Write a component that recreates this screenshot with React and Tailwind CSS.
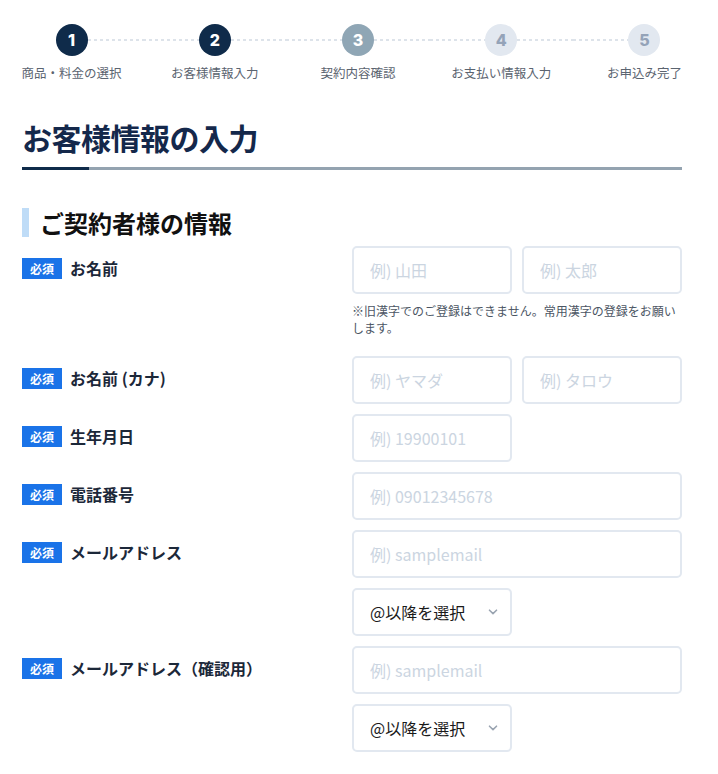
import React from 'react';

const steps = [
  { n: 1, label: '商品・料金の選択', state: 'done' },
  { n: 2, label: 'お客様情報入力', state: 'done' },
  { n: 3, label: '契約内容確認', state: 'current' },
  { n: 4, label: 'お支払い情報入力', state: 'todo' },
  { n: 5, label: 'お申込み完了', state: 'todo' },
];

const circleClass = {
  done: 'bg-[#0f2b4a] text-white',
  current: 'bg-[#8fa6b5] text-white',
  todo: 'bg-[#e2e8f0] text-[#94a3b8]',
};

const dots = 'h-[2px] flex-1 bg-[linear-gradient(to_right,#dde3ea_50%,transparent_0)] bg-[length:6px_2px] bg-repeat-x';

function Stepper() {
  return (
    <div className="grid grid-cols-5 pt-[24px] w-[716px]">
      {steps.map((s, i) => (
        <div key={s.n} className="flex flex-col items-center">
          <div className="flex items-center w-full">
            <div className={i === 0 ? 'flex-1' : dots} />
            <div
              className={`w-[32px] h-[32px] rounded-full flex items-center justify-center text-[16px] font-extrabold font-['Inter',sans-serif] ${circleClass[s.state]}`}
            >
              {s.n}
            </div>
            <div className={i === steps.length - 1 ? 'flex-1' : dots} />
          </div>
          <span className="mt-[8px] text-[12.5px] leading-[18px] text-[#5b6470] whitespace-nowrap">{s.label}</span>
        </div>
      ))}
    </div>
  );
}

function Badge() {
  return (
    <span className="w-[40px] h-[21px] shrink-0 bg-[#1a73e8] text-white text-[12px] font-bold flex items-center justify-center">
      必須
    </span>
  );
}

function Field({ placeholder, wide }) {
  return (
    <input
      type="text"
      placeholder={placeholder}
      className={`${wide ? 'w-[330px]' : 'w-[160px]'} h-[48px] border-2 border-[#e2e8f0] rounded-[5px] px-[16px] text-[16px] text-[#1e293b] placeholder:text-[#cbd5e1] outline-none bg-white`}
    />
  );
}

function SelectBox() {
  return (
    <div className="w-[160px] h-[48px] border-2 border-[#e2e8f0] rounded-[5px] pl-[16px] pr-[12px] flex items-center justify-between text-[16px] text-[#1a1a1a] bg-white">
      <span>@以降を選択</span>
      <svg width="10" height="6" viewBox="0 0 10 6" fill="none">
        <path d="M1.5 1.2 5 4.6 8.5 1.2" stroke="#9aa4b1" strokeWidth="1.6" strokeLinecap="round" strokeLinejoin="round" />
      </svg>
    </div>
  );
}

function Row({ label, children }) {
  return (
    <div className="flex">
      <div className="w-[330px] pt-[12px] flex items-start gap-[8px]">
        <Badge />
        <span className="text-[16px] leading-[21px] font-bold text-[#1c2839]">{label}</span>
      </div>
      <div className="flex flex-col gap-[10px]">{children}</div>
    </div>
  );
}

export default function App() {
  return (
    <div className="w-[718px] min-h-screen bg-white font-['Noto_Sans_CJK_JP','Noto_Sans',sans-serif]">
      <Stepper />

      <main className="pl-[22px] pr-[36px]">
        {/* ページタイトル */}
        <h1 className="mt-[36px] text-[30px] leading-[38px] font-bold text-[#14284b] tracking-[-0.5px]">お客様情報の入力</h1>
        <div className="mt-[11px] flex h-[3px]">
          <div className="w-[67px] bg-[#0f2b4a]" />
          <div className="flex-1 bg-[#94a3b0]" />
        </div>

        {/* ご契約者様の情報 */}
        <div className="mt-[38px] flex items-center gap-[11px] h-[29px]">
          <div className="w-[7px] h-full bg-[#bfdcf7]" />
          <h2 className="text-[24px] font-bold text-[#111] leading-[29px]">ご契約者様の情報</h2>
        </div>

        <div className="mt-[9px] flex flex-col gap-[10px] pb-[20px]">
          <Row label="お名前">
            <div className="flex gap-[10px]">
              <Field placeholder="例) 山田" />
              <Field placeholder="例) 太郎" />
            </div>
            <p className="-mt-[2px] mb-[10px] w-[330px] text-[12px] leading-[17px] text-[#4b5563]">
              ※旧漢字でのご登録はできません。常用漢字の登録をお願いします。
            </p>
          </Row>
          <Row label="お名前 (カナ)">
            <div className="flex gap-[10px]">
              <Field placeholder="例) ヤマダ" />
              <Field placeholder="例) タロウ" />
            </div>
          </Row>
          <Row label="生年月日">
            <Field placeholder="例) 19900101" />
          </Row>
          <Row label="電話番号">
            <Field placeholder="例) 09012345678" wide />
          </Row>
          <Row label="メールアドレス">
            <Field placeholder="例) samplemail" wide />
            <SelectBox />
          </Row>
          <Row label="メールアドレス（確認用）">
            <Field placeholder="例) samplemail" wide />
            <SelectBox />
          </Row>
        </div>
      </main>
    </div>
  );
}
